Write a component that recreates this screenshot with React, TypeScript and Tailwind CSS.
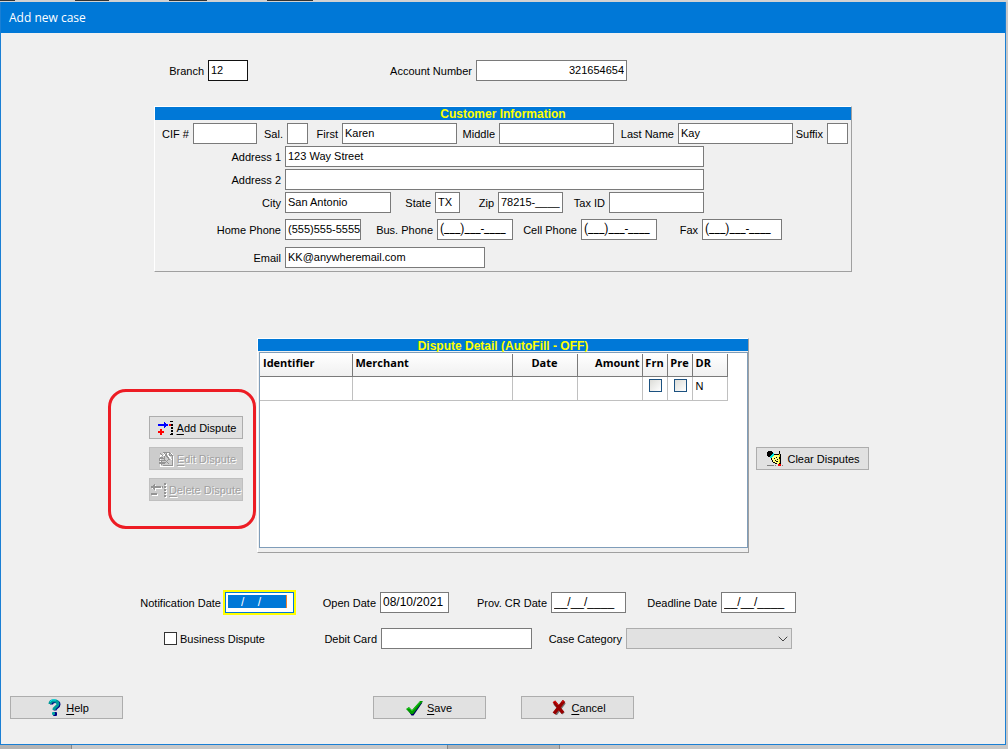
import type { InputHTMLAttributes, ReactNode } from "react";
import clsx from "clsx";
import { ChevronDown } from "lucide-react";

const columns = [
  { title: "Identifier", className: "w-[92px] px-[3px] text-left" },
  { title: "Merchant", className: "w-[160px] px-[3px] text-left" },
  { title: "Date", className: "w-[65px] px-[3px] text-center" },
  { title: "Amount", className: "w-[65px] px-[2px] text-right" },
  { title: "Frn", className: "w-[25px] px-[2px] text-center" },
  { title: "Pre", className: "w-[25px] px-[2px] text-center" },
  { title: "DR", className: "w-[35px] px-[3px] text-left" },
];

type FieldProps = InputHTMLAttributes<HTMLInputElement> & {
  id: string;
  label: string;
  labelClass: string;
  inputClass: string;
};

function Field({ id, label, labelClass, inputClass, ...rest }: FieldProps) {
  return (
    <div className="flex items-center">
      <label htmlFor={id} className={clsx("shrink-0 whitespace-nowrap pt-px pr-1 text-right", labelClass)}>
        {label}
      </label>
      <input
        id={id}
        type="text"
        className={clsx("h-[21px] shrink-0 border bg-white pb-px pl-[2px] outline-none", inputClass)}
        {...rest}
      />
    </div>
  );
}

type FormButtonProps = {
  icon: ReactNode;
  text: string;
  hotkey?: boolean;
  disabled?: boolean;
  className: string;
};

function FormButton({ icon, text, hotkey, disabled, className }: FormButtonProps) {
  return (
    <button
      type="button"
      disabled={disabled}
      className={clsx(
        "flex h-[23px] items-center justify-center whitespace-nowrap border",
        disabled
          ? "border-[#bfbfbf] bg-[#cccccc] text-[#a0a0a0] [text-shadow:1px_1px_0_#fff]"
          : "border-[#adadad] bg-[#e1e1e1] text-black",
        className
      )}
    >
      {icon}
      <span className="pt-px">
        {hotkey ? <span className="underline underline-offset-2">{text[0]}</span> : text[0]}
        {text.slice(1)}
      </span>
    </button>
  );
}

function AddIcon() {
  return (
    <svg width="16" height="16" viewBox="0 0 16 16" shapeRendering="crispEdges" className="shrink-0">
      <path d="M0 4h6v2H0zM6 2h1v6H6zM7 3h1v4H7zM8 4h2v2H8z" fill="#0000ff" />
      <path d="M2 9h2v2h2v2H4v2H2v-2H0v-2h2z" fill="#ff0000" />
      <path d="M11 4h2v2h-2z" fill="#ff0000" />
      <path d="M13 1h2v1h-2zM13 4h2v2h-2zM13 7h2v2h-2zM13 10h2v2h-2zM13 13h2v2h-2zM12 1h1v1h-1zM12 14h1v1h-1z" fill="#000" />
    </svg>
  );
}

function EditIcon() {
  return (
    <svg width="16" height="16" viewBox="0 0 16 16" shapeRendering="crispEdges" className="shrink-0">
      <path d="M1.5 3.5h5l2-2h4l2 3v10h-13zM4 1l7 7M8 2l5 6" fill="none" stroke="#fff" transform="translate(1 1)" />
      <path d="M4.500 1.500h7l3 3v10h-10M11.500 1.500v3h3M2 2l3 3M2 6h3M6 2l6 7M9 2l-3 5M1 7h5v2H1zM1 11h5v1H1zM3 9v5M7 9l4 4M11 8l-4 4M6 14h8" fill="none" stroke="#949494" />
    </svg>
  );
}

function DeleteIcon() {
  return (
    <svg width="16" height="16" viewBox="0 0 16 16" shapeRendering="crispEdges" className="shrink-0">
      <g fill="#fff" transform="translate(1 1)">
        <path d="M0 4h2V3h1V2h1v2h6v2H4v2H3V7H2V6H0zM0 11h6v2H0zM13 1h2v2h-2zM13 4h2v2h-2zM13 7h2v2h-2zM13 10h2v2h-2zM13 13h2v2h-2z" />
      </g>
      <path d="M0 4h2V3h1V2h1v2h6v2H4v2H3V7H2V6H0zM0 11h6v2H0zM11 4h1v2h-1zM13 1h2v2h-2zM13 4h2v2h-2zM13 7h2v2h-2zM13 10h2v2h-2zM13 13h2v2h-2z" fill="#949494" />
    </svg>
  );
}

function ClearIcon() {
  return (
    <svg width="16" height="16" viewBox="0 0 16 16" shapeRendering="crispEdges" className="shrink-0">
      <path d="M6 4h6l1-2v10l-3 1-4-2-2-4z" fill="#ffff80" />
      <path d="M1 0h3l2 2-3 4H1L0 4V1z" fill="#000" />
      <path d="M3 5l3-3 1 1v1L4 7H3z" fill="#00e5e5" />
      <path d="M7 3h4v1H7zM4 7h1v2H4zM5 9h1v2H5zM6 11h2v1H6zM8 12h2v1H8zM7 7h1v1H7zM9 6h1v1H9zM8 9h1v1H8zM10 8h1v1h-1zM9 10h2v1H9zM12 0h1v13h-1zM13 3h1v10h-1zM11 3h1v1h-1z" fill="#000" />
      <path d="M12 3h1v3h-1zM12 8h1v4h-1z" fill="#e5d400" />
      <path d="M11 13h3v2h-3z" fill="#f00000" />
      <path d="M0 14h7v1H0zM8 14h1v1H8zM15 14h1v1h-1z" fill="#808080" />
    </svg>
  );
}

function HelpIcon() {
  return (
    <svg width="13" height="17" viewBox="0 0 13 17" className="shrink-0">
      <path d="M2.500 5C2.500 2 4.500 2 6 2c3 0 4 1 4 3 0 3-4 2.500-4 6" fill="none" stroke="#000080" strokeWidth="3" transform="translate(1 0.500)" />
      <path d="M2 5C2 2 4 1.700 6 1.700c3 0 4 1.300 4 3.300 0 3-4 2.500-4 6" fill="none" stroke="#009a9a" strokeWidth="3" />
      <path d="M2 3l2-2h4" fill="none" stroke="#00e5f0" />
      <rect x="5" y="13" width="4" height="4" rx="1" fill="#000080" />
      <rect x="4" y="13" width="3" height="3" rx="1" fill="#00a5a5" />
    </svg>
  );
}

function CheckIcon() {
  return (
    <svg width="17" height="16" viewBox="0 0 17 16" className="shrink-0">
      <path d="M1 9l2-1 3 3 8-9h2L7 15H5z" fill="#000060" transform="translate(0.500 0.500)" />
      <path d="M0 9l3-2 3 3 8-9 3 0L7 14H5z" fill="#009a00" />
      <path d="M1 9l2-1 3 3 8-9" fill="none" stroke="#1dc81d" />
    </svg>
  );
}

function CrossIcon() {
  return (
    <svg width="14" height="15" viewBox="0 0 14 15" className="shrink-0">
      <path d="M2 3l9 10M12 2L3 14" fill="none" stroke="#707070" strokeWidth="3" transform="translate(0.500 0.500)" />
      <path d="M2 1.500l9 11.500M12 1L2 13.500" fill="none" stroke="#980000" strokeWidth="3.500" />
      <path d="M1 2.500l2-1.500 3 4M10 2l2-1.500" fill="none" stroke="#e01010" />
    </svg>
  );
}

const gray = "border-[#7a7a7a]";
// underscores are narrower in Roboto, so the empty phone masks fit their boxes
const mask = `font-[Roboto,sans-serif] text-xs ${gray}`;

function CustomerInformation() {
  return (
    <section className="mx-[46px] mt-[25px] border border-t-white border-r-[#a0a0a0] border-b-[#a0a0a0] border-l-white pb-[3px]">
      <h2 className="mb-[3px] h-[13px] bg-[#0078d7] text-center text-xs leading-[14px] font-bold text-[#ffff00]">
        Customer Information
      </h2>
      <div className="flex flex-col gap-[2px]">
        <div className="flex">
          <Field id="cif" label="CIF #" labelClass="w-[38px]" inputClass={`w-[64px] ${gray}`} />
          <Field id="sal" label="Sal." labelClass="w-[30px]" inputClass={`w-[21px] ${gray}`} />
          <Field id="first" label="First" labelClass="w-[34px]" inputClass={`w-[115px] ${gray}`} defaultValue="Karen" />
          <Field id="middle" label="Middle" labelClass="w-[42px]" inputClass={`w-[115px] ${gray}`} />
          <Field id="last" label="Last Name" labelClass="w-[64px]" inputClass={`w-[115px] ${gray}`} defaultValue="Kay" />
          <Field id="suffix" label="Suffix" labelClass="w-[34px]" inputClass={`w-[21px] ${gray}`} />
        </div>
        <Field id="address1" label="Address 1" labelClass="w-[130px]" inputClass={`w-[419px] ${gray}`} defaultValue="123 Way Street" />
        <Field id="address2" label="Address 2" labelClass="w-[130px]" inputClass={`w-[419px] ${gray}`} />
        <div className="flex">
          <Field id="city" label="City" labelClass="w-[130px]" inputClass={`w-[106px] ${gray}`} defaultValue="San Antonio" />
          <Field id="state" label="State" labelClass="w-[44px]" inputClass={`w-[25px] ${gray}`} defaultValue="TX" />
          <Field id="zip" label="Zip" labelClass="w-[38px]" inputClass={`w-[65px] ${gray}`} defaultValue="78215-____" />
          <Field id="taxid" label="Tax ID" labelClass="w-[46px]" inputClass={`w-[95px] ${gray}`} />
        </div>
        <div className="mt-1 flex">
          <Field id="home" label="Home Phone" labelClass="w-[130px]" inputClass={`w-[76px] ${gray}`} defaultValue="(555)555-5555" />
          <Field id="bus" label="Bus. Phone" labelClass="w-[76px]" inputClass={`w-[76px] ${mask}`} defaultValue="(___)___-____" />
          <Field id="cell" label="Cell Phone" labelClass="w-[68px]" inputClass={`w-[76px] ${mask}`} defaultValue="(___)___-____" />
          <Field id="fax" label="Fax" labelClass="w-[45px]" inputClass={`w-[80px] ${mask}`} defaultValue="(___)___-____" />
        </div>
        <div className="mt-[5px]">
          <Field id="email" label="Email" labelClass="w-[130px]" inputClass={`w-[200px] ${gray}`} defaultValue="KK@anywheremail.com" />
        </div>
      </div>
    </section>
  );
}

function GridCheckbox({ label }: { label: string }) {
  return (
    <input
      type="checkbox"
      aria-label={label}
      className="mx-auto block size-[13px] appearance-none border border-[#1c5180] bg-gradient-to-br from-[#dcdcd7] to-white"
    />
  );
}

function DisputeDetail() {
  return (
    <section className="flex h-[215px] w-[492px] flex-col border border-t-white border-r-[#a0a0a0] border-b-[#a0a0a0] border-l-white pb-1">
      <h2 className="mb-px h-3 shrink-0 bg-[#0078d7] text-center text-xs leading-[14px] font-bold text-[#ffff00]">
        Dispute Detail (AutoFill - OFF)
      </h2>
      <div className="relative ml-px flex-1 border border-[#7f9db9] bg-white pt-px">
        <table className="w-[467px] table-fixed border-collapse">
          <thead>
            <tr className="h-[22px] bg-gradient-to-b from-white to-[#f0f0f0] font-['Open_Sans',sans-serif]">
              {columns.map((col) => (
                <th
                  key={col.title}
                  className={clsx("border-r border-b border-[#7a7a7a] pb-1 leading-4 font-bold", col.className)}
                >
                  {col.title}
                </th>
              ))}
            </tr>
          </thead>
          <tbody>
            <tr className="h-6">
              {columns.slice(0, 4).map((col) => (
                <td key={col.title} className="border-r border-b border-[#c0c0c0]" />
              ))}
              <td className="border-r border-b border-[#c0c0c0] p-0 pb-[6px] pl-[2px]">
                <GridCheckbox label="Frn" />
              </td>
              <td className="border-r border-b border-[#c0c0c0] p-0 pb-[6px] pl-[2px]">
                <GridCheckbox label="Pre" />
              </td>
              <td className="border-r border-b border-[#c0c0c0] px-[3px] pb-1">N</td>
            </tr>
          </tbody>
        </table>
      </div>
    </section>
  );
}

export default function App() {
  return (
    <div className="flex min-h-screen flex-col bg-[#c8c8c8] font-['Liberation_Sans',Arial,sans-serif] text-[11px] leading-[14px] text-black">
      <div className="flex h-[2px] gap-[60px] overflow-hidden bg-[#d2d2d2]">
        <span className="h-px w-[15px] bg-[#333]" />
        <span className="h-px w-[34px] bg-[#333]" />
        <span className="h-px w-[38px] bg-[#333]" />
        <span className="h-px w-[46px] bg-[#333]" />
      </div>
      <main className="mr-[2px] flex flex-1 flex-col border border-t-0 border-[#1a7fd4] bg-[#f0f0f0]">
        <h1 className="h-[31px] bg-[#0078d7] pl-2 font-['Open_Sans',sans-serif] text-xs leading-8 text-white">
          Add new case
        </h1>

        <form className="flex flex-1 flex-col pt-[27px]">
          <div className="mx-auto w-full max-w-[790px]">
            <div className="flex pl-[46px]">
              <Field id="branch" label="Branch" labelClass="w-[54px]" inputClass="w-[40px] border-[#111]" defaultValue="12" />
              <Field
                id="account"
                label="Account Number"
                labelClass="w-[228px]"
                inputClass={`w-[151px] pr-[2px] text-right ${gray}`}
                defaultValue="321654654"
              />
            </div>

            <CustomerInformation />

            <div className="mt-[66px] flex items-start">
              <div className="mt-[51px] mr-px flex h-[140px] w-[148px] flex-col items-end gap-2 rounded-[18px] border-3 border-[#ed1c24] pt-6 pr-[10px]">
                <FormButton icon={<AddIcon />} text="Add Dispute" hotkey className="w-[94px] gap-[3px] pl-[2px]" />
                <FormButton icon={<EditIcon />} text="Edit Dispute" hotkey disabled className="w-[94px] gap-[3px] pl-[2px]" />
                <FormButton icon={<DeleteIcon />} text="Delete Dispute" hotkey disabled className="w-[94px] gap-[2px]" />
              </div>
              <DisputeDetail />
              <FormButton icon={<ClearIcon />} text="Clear Disputes" className="mt-[109px] ml-[7px] w-[113px] gap-1 pl-[2px]" />
            </div>

            <div className="mt-[39px] flex pl-8">
              <div className="flex items-center">
                <label htmlFor="notification" className="w-[85px] pt-px pr-1 text-right whitespace-nowrap">
                  Notification Date
                </label>
                <div className="h-[21px] w-[69px] border border-[#0078d7] bg-white p-[2px] outline-2 outline-[#ffff00]">
                  <input
                    id="notification"
                    type="text"
                    className="block h-[13px] w-[59px] border-r border-[#f08030] bg-[#0078d7] pl-[13px] text-xs text-white outline-none"
                    defaultValue="/    /"
                  />
                </div>
              </div>
              <Field id="open" label="Open Date" labelClass="w-[86px]" inputClass={`w-[69px] text-xs ${gray}`} defaultValue="08/10/2021" />
              <Field id="prov" label="Prov. CR Date" labelClass="w-[102px]" inputClass={`w-[75px] text-xs ${gray}`} defaultValue="__/__/____" />
              <Field id="deadline" label="Deadline Date" labelClass="w-[95px]" inputClass={`w-[75px] text-xs ${gray}`} defaultValue="__/__/____" />
            </div>

            <div className="mt-[15px] flex pl-14">
              <label className="flex w-[158px] items-center gap-[3px]">
                <input type="checkbox" className="size-[13px] appearance-none border border-[#333] bg-white" />
                <span className="pt-px">Business Dispute</span>
              </label>
              <Field id="debit" label="Debit Card" labelClass="w-[59px]" inputClass={`w-[151px] ${gray}`} />
              <div className="flex items-center">
                <label htmlFor="category" className="w-[94px] pt-px pr-1 text-right whitespace-nowrap">
                  Case Category
                </label>
                <div className="grid items-center">
                  <select
                    id="category"
                    disabled
                    className="col-start-1 row-start-1 h-[21px] w-[166px] appearance-none border border-[#adadad] bg-[#e1e1e1]"
                  />
                  <ChevronDown
                    size={16}
                    strokeWidth={1.5}
                    className="pointer-events-none col-start-1 row-start-1 mr-px justify-self-end text-[#444]"
                  />
                </div>
              </div>
            </div>
          </div>

          <div className="mt-auto grid grid-cols-[1fr_auto_1fr] px-[9px] pb-[25px]">
            <FormButton icon={<HelpIcon />} text="Help" hotkey className="w-[113px] gap-[5px] pl-1" />
            <div className="flex gap-[35px]">
              <FormButton icon={<CheckIcon />} text="Save" hotkey className="w-[113px] gap-1" />
              <FormButton icon={<CrossIcon />} text="Cancel" hotkey className="w-[113px] gap-[5px] pl-1" />
            </div>
          </div>
        </form>
      </main>
      <div className="flex h-1">
        <span className="w-[72px] border-r border-[#888] bg-[#b4b4b4]" />
        <span className="w-[375px]" />
        <span className="w-[113px] border-x border-[#888] bg-[#b4b4b4]" />
      </div>
    </div>
  );
}
